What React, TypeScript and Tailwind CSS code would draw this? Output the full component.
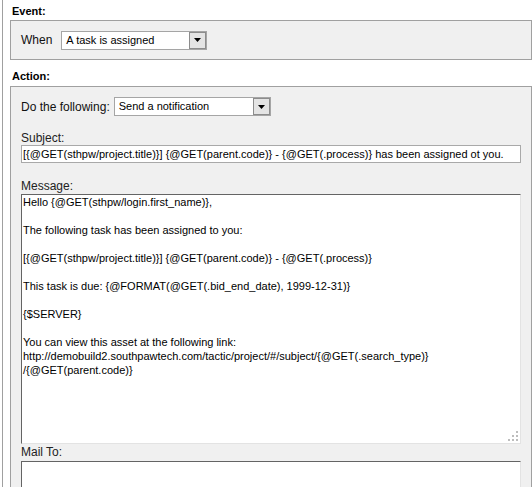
import React from 'react';

const Select = ({ value, width }: { value: string; width: string }) => (
  <div className={`flex h-[19px] ${width} border border-[#a5a5a5] bg-white`}>
    <div className="flex-1 pl-[4px] text-[11px] leading-[17px] text-black whitespace-nowrap">{value}</div>
    <div className="flex w-[17px] items-center justify-center border border-[#8c8c8c] bg-[#e4e4e4]">
      <svg width="7" height="4" viewBox="0 0 7 4">
        <polygon points="0,0 7,0 3.5,4" fill="#000" />
      </svg>
    </div>
  </div>
);

const messageLines = [
  'Hello {@GET(sthpw/login.first_name)},',
  '',
  'The following task has been assigned to you:',
  '',
  '[{@GET(sthpw/project.title)}] {@GET(parent.code)} - {@GET(.process)}',
  '',
  'This task is due: {@FORMAT(@GET(.bid_end_date), 1999-12-31)}',
  '',
  '{$SERVER}',
  '',
  'You can view this asset at the following link:',
  'http://demobuild2.southpawtech.com/tactic/project/#/subject/{@GET(.search_type)}',
  '/{@GET(parent.code)}',
];

export default function App() {
  return (
    <div className="h-[487px] w-[532px] overflow-hidden bg-white pl-[2px] font-['Liberation_Sans',Arial,sans-serif] text-[#111]">
      <div className="h-full border-l border-[#a0a0a0] pl-[7px]">
        {/* Event */}
        <div className="h-[20px] pl-[2px] pt-[5px] text-[11px] font-bold leading-[13px] text-black">Event:</div>
        <div className="flex h-[40px] items-center gap-[9px] border border-[#a0a0a0] bg-[#f0f0f0] px-[10px]">
          <span className="text-[12px] leading-[14px]">When</span>
          <Select value="A task is assigned" width="w-[146px]" />
        </div>

        {/* Action */}
        <div className="h-[26px] pl-[2px] pt-[10px] text-[11px] font-bold leading-[13px] text-black">Action:</div>
        <div className="flex h-[420px] flex-col border border-[#a0a0a0] bg-[#f0f0f0] px-[10px] pt-[10px]">
          <div className="flex h-[19px] items-center gap-[4px]">
            <span className="text-[12px] leading-[14px]">Do the following:</span>
            <Select value="Send a notification" width="w-[157px]" />
          </div>

          <div className="mt-[15px] text-[12px] leading-[14px] text-[#222]">Subject:</div>
          <div className="h-[18px] w-[500px] border border-[#a9a9a9] bg-white pl-[1px] text-[11px] leading-[16px] text-black whitespace-nowrap">
            [{'{'}@GET(sthpw/project.title){'}'}] {'{'}@GET(parent.code){'}'} - {'{'}@GET(.process){'}'} has been assigned ot you.
          </div>

          <div className="mt-[16px] text-[12px] leading-[15px] text-[#222]">Message:</div>
          <div className="relative h-[250px] w-[500px] border-b border-l border-r border-t border-b-[#e3e3e3] border-l-[#646464] border-r-[#e3e3e3] border-t-[#646464] bg-white pl-[1px] text-[11px] leading-[14px] text-black">
            {messageLines.map((line, i) => (
              <div key={i} className="h-[14px] whitespace-pre">{line}</div>
            ))}
            <svg className="absolute bottom-[2px] right-[2px]" width="10" height="10" viewBox="0 0 10 10">
              <rect x="8" y="0" width="2" height="2" fill="#bdbdbd" />
              <rect x="4" y="4" width="2" height="2" fill="#bdbdbd" />
              <rect x="8" y="4" width="2" height="2" fill="#bdbdbd" />
              <rect x="0" y="8" width="2" height="2" fill="#bdbdbd" />
              <rect x="4" y="8" width="2" height="2" fill="#bdbdbd" />
              <rect x="8" y="8" width="2" height="2" fill="#bdbdbd" />
            </svg>
          </div>

          <div className="h-[17px] text-[12px] leading-[17px] text-[#222]">Mail To:</div>
          <div className="h-[40px] w-[500px] border-b border-l border-r border-t border-b-[#e3e3e3] border-l-[#646464] border-r-[#e3e3e3] border-t-[#646464] bg-white"></div>
        </div>
      </div>
    </div>
  );
}
